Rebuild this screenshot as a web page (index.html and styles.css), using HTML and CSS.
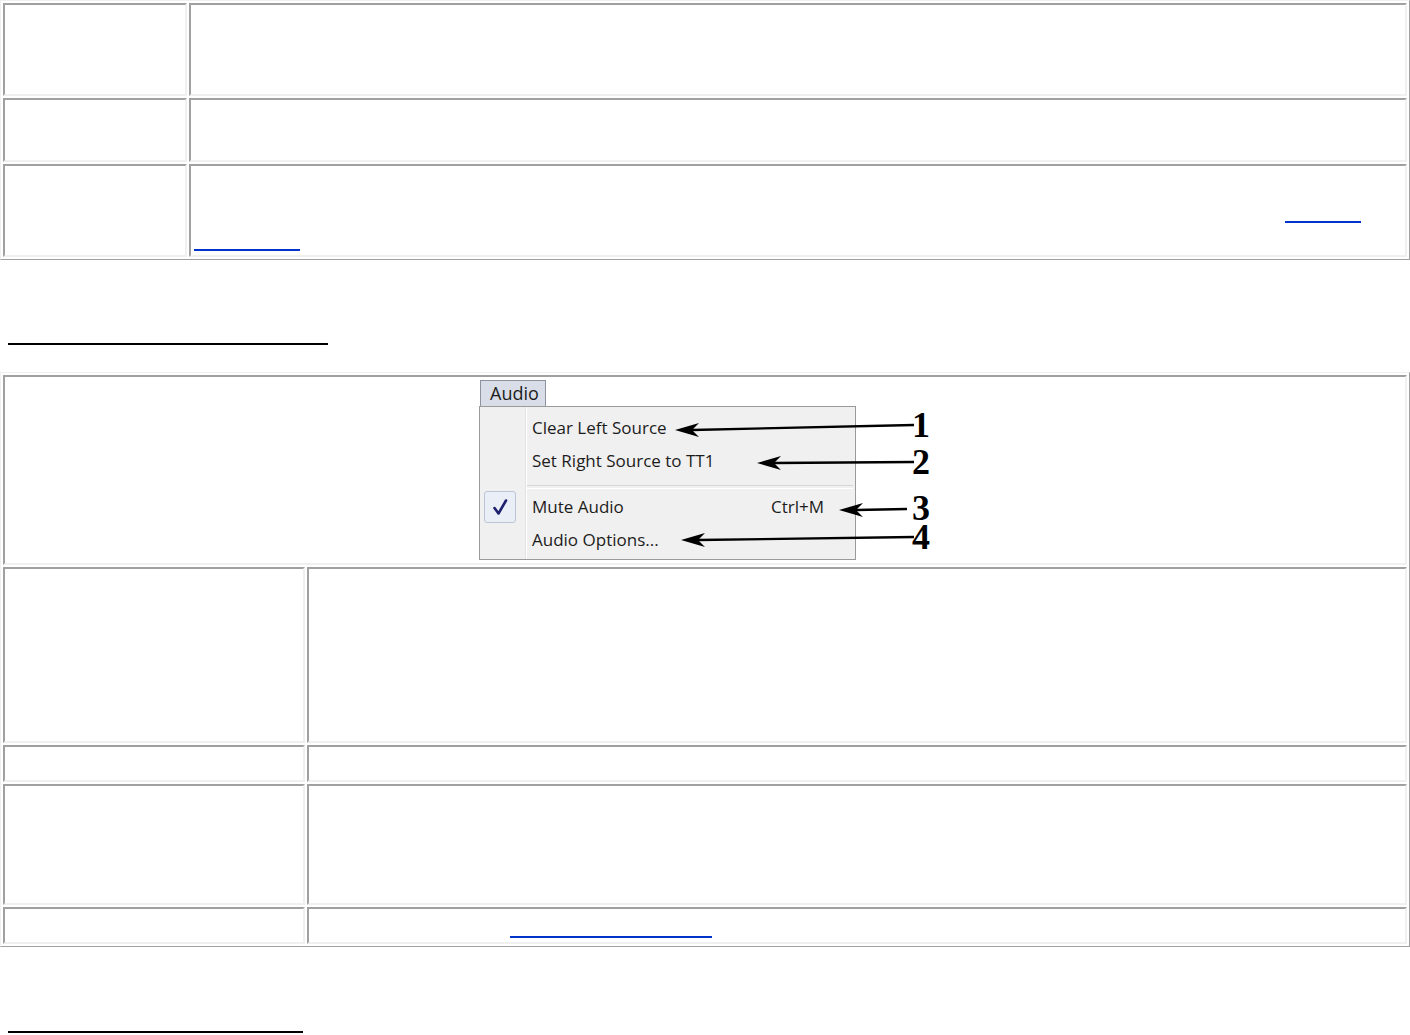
FILE: index.html
```html
<!DOCTYPE html>
<html lang="en">
<head>
  <meta charset="UTF-8">
  <meta name="viewport" content="width=device-width, initial-scale=1.0">
  <title>Audio Menu</title>
  <link rel="stylesheet" href="styles.css">
</head>
<body>

  <!-- Previous menu table -->
  <table class="grid grid-prev">
    <colgroup>
      <col class="col-prev">
      <col>
    </colgroup>
    <tr class="row-tall">
      <td></td>
      <td></td>
    </tr>
    <tr class="row-mid">
      <td></td>
      <td></td>
    </tr>
    <tr class="row-tall">
      <td></td>
      <td>
        <div class="text-line"></div>
        <div class="text-line"><span class="link-rule link-next"></span></div>
        <div class="text-line"><span class="link-rule link-wrap"></span></div>
      </td>
    </tr>
  </table>

  <div class="section-rule rule-audio"></div>

  <!-- Audio menu table -->
  <table class="grid grid-audio">
    <colgroup>
      <col class="col-audio">
      <col>
    </colgroup>
    <tr class="row-shot">
      <td colspan="2" class="shot-cell">
        <div class="menu-shot">
          <div class="menu-title">Audio</div>
          <div class="menu-panel">
            <div class="menu-item">
              <span class="item-gutter"></span>
              <span class="item-label">Clear Left Source</span>
            </div>
            <div class="menu-item">
              <span class="item-gutter"></span>
              <span class="item-label">Set Right Source to TT1</span>
            </div>
            <div class="menu-sep"></div>
            <div class="menu-item">
              <span class="item-gutter">
                <span class="check-box">
                  <svg width="30" height="30" viewBox="0 0 30 30">
                    <path d="M9.5 16 L13.5 21.5 L21 8.5" fill="none" stroke="#1d2170" stroke-width="2.6" stroke-linecap="round" stroke-linejoin="round"/>
                  </svg>
                </span>
              </span>
              <span class="item-label">Mute Audio</span>
              <span class="item-key">Ctrl+M</span>
            </div>
            <div class="menu-item">
              <span class="item-gutter"></span>
              <span class="item-label">Audio Options...</span>
            </div>
          </div>

          <!-- numbered callouts drawn over the screenshot -->
          <svg class="callouts" width="455" height="182" viewBox="0 0 455 182">
            <g fill="#000">
              <path d="M196 50 L220 43 L213 50 L220 57 Z"/>
              <path d="M278 83 L302 76 L295 83 L302 90 Z"/>
              <path d="M360 130 L384 123 L377 130 L384 137 Z"/>
              <path d="M202 160 L226 153 L219 160 L226 167 Z"/>
            </g>
            <g stroke="#000" stroke-width="2.4">
              <line x1="213" y1="50" x2="435" y2="45"/>
              <line x1="295" y1="83" x2="435" y2="82"/>
              <line x1="377" y1="130" x2="428" y2="129"/>
              <line x1="219" y1="160" x2="435" y2="157"/>
            </g>
            <g class="callout-num">
              <text x="433" y="57">1</text>
              <text x="433" y="94">2</text>
              <text x="433" y="140">3</text>
              <text x="433" y="169">4</text>
            </g>
          </svg>
        </div>
      </td>
    </tr>
    <tr class="row-desc">
      <td></td>
      <td></td>
    </tr>
    <tr class="row-one">
      <td></td>
      <td></td>
    </tr>
    <tr class="row-four">
      <td></td>
      <td></td>
    </tr>
    <tr class="row-one">
      <td></td>
      <td>
        <div class="text-line"><span class="link-rule link-options"></span></div>
      </td>
    </tr>
  </table>

  <div class="section-rule rule-next"></div>

</body>
</html>
```

FILE: styles.css
```css
* {
  box-sizing: border-box;
}

body {
  margin: 0;
  font-family: "Liberation Serif", serif;
  font-size: 24px;
  line-height: 28px;
  color: #000;
  background-color: #fff;
}

/* Bordered tables, old style */
.grid {
  width: 100%;
  table-layout: fixed;
  border-collapse: separate;
  border-spacing: 2px;
  border: 1px solid;
  border-color: #f0f0f0 #a0a0a0 #a0a0a0 #f0f0f0;
}

.grid td {
  border: 2px solid;
  border-color: #a0a0a0 #f0f0f0 #f0f0f0 #a0a0a0;
  padding: 1px;
  vertical-align: top;
}

.col-prev {
  width: 184px;
}

.col-audio {
  width: 302px;
}

.grid-prev .row-tall { height: 93px; }
.grid-prev .row-mid { height: 64px; }

.row-shot { height: 190px; }
.row-desc { height: 176px; }
.row-one { height: 37px; }
.row-four { height: 121px; }

.text-line {
  display: flow-root;
  height: 28px;
}

/* link underlines */
.link-rule {
  display: block;
  height: 2px;
  margin-top: 26px;
  background-color: #0033cc;
}

.link-next {
  width: 76px;
  margin-left: 1093px;
}

.link-wrap {
  width: 106px;
  margin-left: 2px;
}

.link-options {
  width: 202px;
  margin-left: 200px;
}

/* section headings */
.section-rule {
  height: 2px;
  margin-left: 8px;
  background-color: #000;
}

.rule-audio {
  width: 320px;
  margin-top: 83px;
  margin-bottom: 27px;
}

.rule-next {
  width: 295px;
  margin-top: 84px;
}

/* Audio menu screenshot */
.menu-shot {
  position: relative;
  width: 455px;
  height: 182px;
  margin: 0 0 0 473px;
  font-family: "Open Sans", "DejaVu Sans", sans-serif;
  font-size: 17px;
  line-height: 33px;
  color: #1c1c1c;
}

.menu-title {
  width: 66px;
  height: 26px;
  margin: 2px 0 0 1px;
  padding-left: 9px;
  border: 1px solid #8e949f;
  border-bottom: none;
  background-color: #d9dde8;
  font-size: 18px;
  line-height: 25px;
}

.menu-panel {
  width: 377px;
  height: 154px;
  padding: 4px 0 3px;
  border: 1px solid #9a9a9a;
  background: linear-gradient(to right, #f0f0f0 45px, #e2e2e2 45px, #e2e2e2 46px, #fff 46px, #fff 47px, #f0f0f0 47px);
}

.menu-item {
  display: flex;
  align-items: center;
  height: 33px;
}

.item-gutter {
  display: flex;
  align-items: center;
  width: 52px;
  height: 33px;
  padding-left: 4px;
}

.item-label {
  flex: 1;
  white-space: nowrap;
}

.item-key {
  padding-right: 31px;
}

.check-box {
  display: flex;
  justify-content: center;
  align-items: center;
  width: 32px;
  height: 32px;
  border: 1px solid #bcc5d6;
  border-radius: 3px;
  background-color: #eaeef6;
}

.menu-sep {
  height: 13px;
  margin: 0 2px 0 47px;
  padding-top: 8px;
}

.menu-sep::before {
  content: "";
  display: block;
  height: 2px;
  border-top: 1px solid #d6d6d6;
  border-bottom: 1px solid #fff;
}

.callouts {
  position: absolute;
  top: 0;
  left: 0;
  pointer-events: none;
}

.callout-num text {
  font-family: "Liberation Serif", serif;
  font-weight: bold;
  font-size: 36px;
}
```
